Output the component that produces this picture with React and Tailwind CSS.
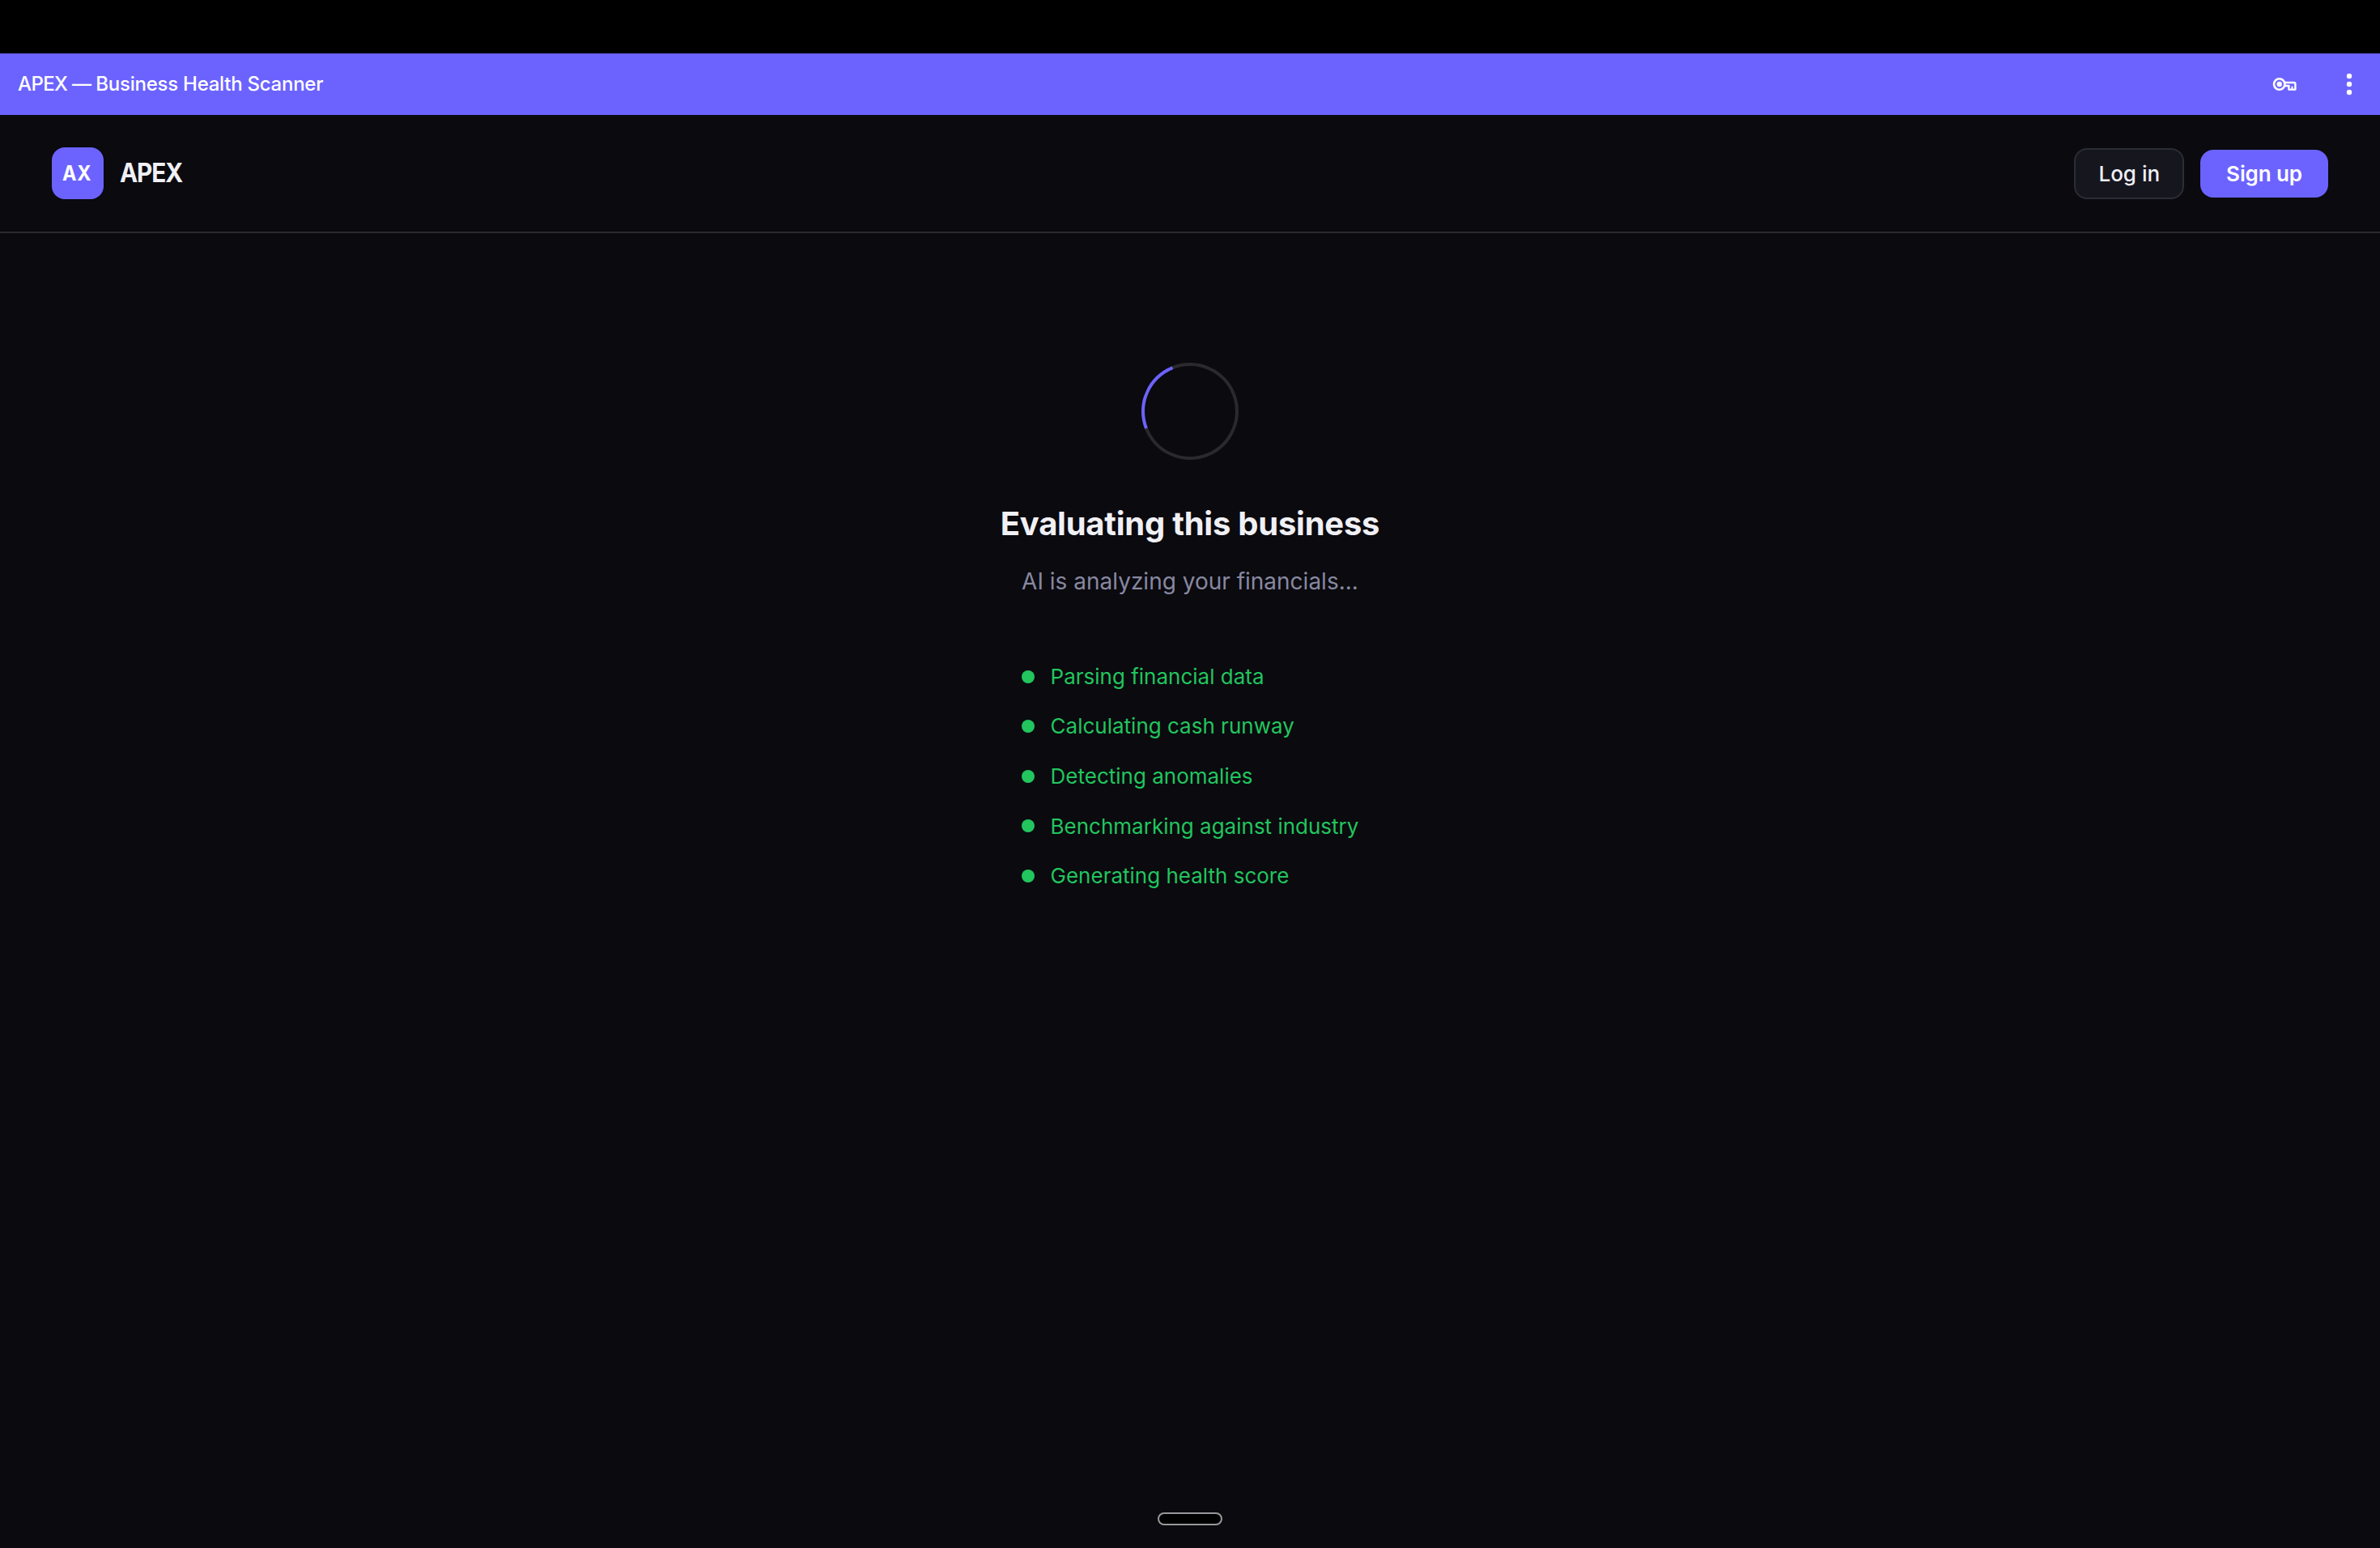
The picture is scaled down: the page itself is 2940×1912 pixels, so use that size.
const steps = [
  { id: 1, label: "Parsing financial data" },
  { id: 2, label: "Calculating cash runway" },
  { id: 3, label: "Detecting anomalies" },
  { id: 4, label: "Benchmarking against industry" },
  { id: 5, label: "Generating health score" },
]

const KeyIcon = () => (
  <svg width="32" height="20" viewBox="0 0 32 20" fill="none">
    <circle cx="9.7" cy="10" r="6.7" stroke="white" strokeWidth="2.6" />
    <circle cx="9.7" cy="10" r="3.2" fill="white" />
    <path d="M16 8H27.6a1.8 1.8 0 0 1 1.8 1.8V16.6H21.4V12H16" stroke="white" strokeWidth="2.4" strokeLinejoin="round" />
    <path d="M25.5 16.5V12.6" stroke="white" strokeWidth="2" />
  </svg>
)

const MenuIcon = () => (
  <svg width="8" height="28" viewBox="0 0 8 28" fill="white">
    <circle cx="4" cy="4" r="3.2" />
    <circle cx="4" cy="14" r="3.2" />
    <circle cx="4" cy="24" r="3.2" />
  </svg>
)

const TitleBar = () => (
  <div className="flex h-[76px] items-center justify-between bg-[#6c63ff] pr-[34px] pl-[22px] text-white">
    <span className="text-[24px] leading-none font-medium tracking-[-0.25px]">
      <span className="tracking-[-0.6px]">APEX — </span>Business Health Scanner
    </span>
    <div className="flex items-center gap-[60px]">
      <KeyIcon />
      <MenuIcon />
    </div>
  </div>
)

const Header = () => (
  <header className="flex h-[146px] items-center justify-between border-b-2 border-[#29292e] px-16">
    <div className="flex items-center gap-5">
      <div className="flex size-16 items-center justify-center rounded-[16px] bg-[#6c63ff] pr-0.5 pb-0.5 text-[26px] font-bold text-white">
        <span className="scale-x-90 tracking-[0.8px]">AX</span>
      </div>
      <span className="origin-left scale-x-[0.93] text-[32px] leading-none font-bold tracking-[-1.2px] text-[#f0f0f5]">APEX</span>
    </div>
    <div className="flex items-center gap-5">
      <button className="rounded-[16px] border-2 border-[#2c2c34] bg-[#16161f] px-7 py-[14px] text-[26px] leading-[31px] font-medium text-[#f0f0f5]">
        Log in
      </button>
      <button className="rounded-[16px] bg-[#6c63ff] px-8 py-[14px] text-[26px] leading-[31px] font-semibold tracking-[-0.1px] text-white">
        Sign up
      </button>
    </div>
  </header>
)

const App = () => {
  return (
    <div className="flex h-[1912px] w-[2940px] flex-col bg-[#0a0a0f] font-['Inter',sans-serif]">
      <div className="h-[66px] bg-black" />
      <TitleBar />
      <Header />
      <main className="flex flex-col items-center pt-40">
        <div className="size-[120px] rotate-[-66.5deg] rounded-full border-4 border-[#29292e] border-t-[#6c63ff]" />
        <h1 className="mt-[47px] text-[40px] leading-[64px] font-bold tracking-[-0.25px] text-[#f0f0f5]">Evaluating this business</h1>
        <p className="mt-[17px] text-[28px] leading-[45px] text-[#8888a0]">AI is analyzing your financials...</p>
        <ul className="mt-[73.8px] flex flex-col gap-5">
          {steps.map((step) => (
            <li key={step.id} className="flex items-center gap-5 text-[26px] leading-[41.6px] text-[#22c55e]">
              <span className="size-4 rounded-full bg-[#22c55e]" />
              {step.label}
            </li>
          ))}
        </ul>
      </main>
      <div className="mx-auto mt-auto mb-7 h-4 w-20 rounded-full border-2 border-[#98989b] bg-black" />
    </div>
  )
}

export default App
